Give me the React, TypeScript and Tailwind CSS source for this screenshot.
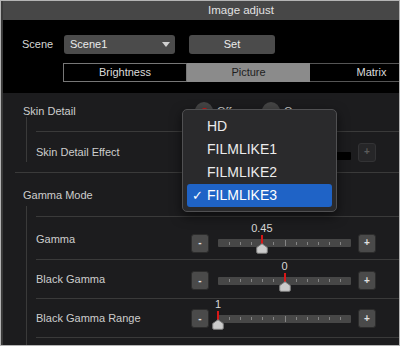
import React from "react";

const TICKS = [1, 2, 3, 4, 5, 6, 7, 8, 9, 10, 11];

function StepButton({ label, disabled }: { label: string; disabled?: boolean }) {
    return (
        <div
            className={`w-[18px] h-[19px] rounded-[3px] flex items-center justify-center text-[10px] font-bold leading-none ${
                disabled
                    ? "bg-[#262628] border border-[#333335] text-[#5c5c5c]"
                    : "bg-[#4a4a4a] border border-[#2c2c2c] text-[#e0e0e0]"
            }`}
        >
            {label}
        </div>
    );
}

function Slider({ value, frac, disabled }: { value?: string; frac?: number; disabled?: boolean }) {
    const left = (frac ?? 0) * 133;
    return (
        <div className="flex items-center">
            <StepButton label="-" disabled={disabled} />
            <div
                className={`relative w-[133px] h-[8px] ml-[9px] mr-[7px] rounded-[1px] ${
                    disabled ? "bg-black mt-[8px]" : "bg-[#474747]"
                }`}
            >
                {!disabled &&
                    TICKS.map((t) => (
                        <div
                            key={t}
                            className={`absolute w-px bg-[#858585] ${t === 6 ? "top-[1px] h-[6px]" : "top-[2.5px] h-[3px]"}`}
                            style={{ left: (t * 133) / 12 }}
                        />
                    ))}
                {!disabled && (
                    <>
                        <div
                            className="absolute -top-[16px] -translate-x-1/2 text-[11px] leading-none text-[#d8d8d8]"
                            style={{ left }}
                        >
                            {value}
                        </div>
                        <div className="absolute -top-[4px] w-[2px] h-[9px] bg-[#d81818] -ml-px" style={{ left }} />
                        <svg
                            className="absolute top-[4px] -ml-[6px]"
                            style={{ left }}
                            width="12"
                            height="11"
                            viewBox="0 0 12 11"
                        >
                            <path
                                d="M6 0.7 L11.3 4.6 V9 Q11.3 10.3 10 10.3 H2 Q0.7 10.3 0.7 9 V4.6 Z"
                                fill="#cbcbcb"
                                stroke="#7c7c7c"
                                strokeWidth="1"
                            />
                        </svg>
                    </>
                )}
            </div>
            <StepButton label="+" disabled={disabled} />
        </div>
    );
}

function Radio({ label, checked }: { label: string; checked?: boolean }) {
    return (
        <div className="flex items-center w-[67px]">
            <div className="w-[18px] h-[18px] rounded-full bg-[#454545] flex items-center justify-center">
                {checked && <div className="w-[7px] h-[7px] rounded-full bg-[#d81818]" />}
            </div>
            <span className="ml-[4px] text-[11px] text-[#cfcfcf]">{label}</span>
        </div>
    );
}

export default function App() {
    const options = ["HD", "FILMLIKE1", "FILMLIKE2", "FILMLIKE3"];
    const selected = "FILMLIKE3";

    return (
        <div className="relative w-[400px] h-[346px] overflow-hidden bg-black border border-[#b4b4b4] font-['Liberation_Sans',Arial,sans-serif]">
            <div className="w-[478px] h-full border-l-2 border-[#3a3a3a] flex flex-col">
                <div className="h-[19px] shrink-0 bg-[#474747] flex items-center justify-center text-[11.5px] text-[#e2e2e2]">
                    Image adjust
                </div>

                <div className="mt-[15px] h-[19px] shrink-0 flex items-center pl-[19px]">
                    <span className="w-[42px] text-[11px] text-[#d6d6d6]">Scene</span>
                    <div className="w-[111px] h-[19px] rounded-[3px] bg-[#4b4b4b] flex items-center pl-[6px] pr-[5px] text-[11px] text-[#ececec]">
                        <span className="flex-1">Scene1</span>
                        <svg width="8" height="5" viewBox="0 0 8 5">
                            <path d="M0 0 H8 L4 5 Z" fill="#d0d0d0" />
                        </svg>
                    </div>
                    <div className="ml-[14px] w-[86px] h-[19px] rounded-[3px] bg-[#4b4b4b] flex items-center justify-center text-[11px] text-[#ececec]">
                        Set
                    </div>
                </div>

                <div className="mt-[9px] ml-[60px] h-[19px] shrink-0 flex text-[11px]">
                    <div className="w-[124px] border border-[#777] flex items-center justify-center text-[#dcdcdc]">
                        Brightness
                    </div>
                    <div className="w-[123px] bg-[#8b8b8b] flex items-center justify-center text-[#1e1e1e]">
                        Picture
                    </div>
                    <div className="w-[123px] border-y border-[#555] flex items-center justify-center text-[#dcdcdc]">
                        Matrix
                    </div>
                </div>

                <div className="mt-[11px] flex-1 bg-[#1c1c1e] text-[11px] text-[#cdcdcd]">
                    {/* Skin Detail */}
                    <div className="ml-[12px]">
                        <div className="h-[31px] pt-[5px] flex items-center pl-[8px]">
                            <span className="w-[172px]">Skin Detail</span>
                            <Radio label="Off" checked />
                            <Radio label="On" />
                        </div>
                        <div className="flex">
                            <div className="w-px bg-[#3a3a3a] ml-[11px] -mt-[7px] mb-[10px]" />
                            <div className="flex-1 ml-[9px] pt-[7px]">
                                <div className="h-[41px] border-t border-[#3a3a3a] flex items-center">
                                    <span className="w-[155px]">Skin Detail Effect</span>
                                    <Slider disabled />
                                </div>
                            </div>
                        </div>
                    </div>

                    {/* Gamma Mode */}
                    <div className="ml-[12px] border-t border-[#3a3a3a]">
                        <div className="h-[36px] pt-[9px] flex items-center pl-[8px]">
                            <span>Gamma Mode</span>
                        </div>
                        <div className="flex">
                            <div className="w-px bg-[#3a3a3a] ml-[11px] -mt-[3px]" />
                            <div className="flex-1 ml-[9px] pt-[7px]">
                                <div className="h-[43px] border-t border-[#3a3a3a] flex items-center">
                                    <span className="w-[155px] mt-[2px]">Gamma</span>
                                    <div className="mt-[10px]">
                                        <Slider value="0.45" frac={0.33} />
                                    </div>
                                </div>
                                <div className="h-[39px] border-t border-[#3a3a3a] flex items-center">
                                    <span className="w-[155px]">Black Gamma</span>
                                    <div className="mt-[3px]">
                                        <Slider value="0" frac={0.5} />
                                    </div>
                                </div>
                                <div className="h-[39px] border-t border-[#3a3a3a] flex items-center">
                                    <span className="w-[155px]">Black Gamma Range</span>
                                    <div className="mt-[1px]">
                                        <Slider value="1" frac={0} />
                                    </div>
                                </div>
                                <div className="h-[12px] border-t border-[#3a3a3a]" />
                            </div>
                        </div>
                    </div>
                </div>
            </div>

            {/* open Gamma Mode menu */}
            <div className="absolute left-[181px] top-[108px] w-[155px] rounded-[5px] border border-[#505052] bg-[#2a2a2c] shadow-[0_4px_12px_rgba(0,0,0,0.6)] px-[4px] pt-[5px] pb-[4px] text-[14px] text-[#ececec]">
                {options.map((o) => (
                    <div
                        key={o}
                        className={`h-[23px] flex items-center rounded-[3px] ${o === selected ? "bg-[#1f63c6] text-white" : ""}`}
                    >
                        <span className="w-[20px] pl-[5px] text-[13px]">{o === selected ? "✓" : ""}</span>
                        <span>{o}</span>
                    </div>
                ))}
            </div>
        </div>
    );
}
